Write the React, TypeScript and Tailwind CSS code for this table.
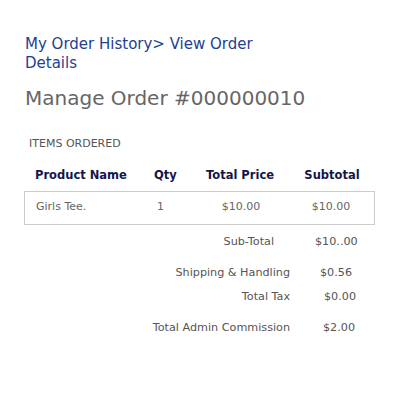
import React from "react";

export default function App() {
  const font = { fontFamily: '"DejaVu Sans", sans-serif' };
  return (
    <div className="w-[400px] h-[400px] bg-white overflow-hidden" style={font}>
      <div className="pl-[25px] pt-[35px]">
        <div className="w-[250px] text-[15px] leading-[19px] text-[#1f3f91]">
          My Order History&gt; View Order Details
        </div>
        <div className="mt-[13px] text-[20px] leading-[25px] text-[#666666]">
          Manage Order #000000010
        </div>
      </div>
      <div className="pl-[29px] mt-[26px] text-[11px] leading-[14px] text-[#555555] uppercase">
        Items Ordered
      </div>
      <div className="ml-[24px] w-[351px] mt-[12px]">
        <div className="grid grid-cols-[119px_52px_90px_90px] text-[11.5px] font-bold text-[#14164a] h-[28px] items-center">
          <div className="pl-[11px] pb-[2px]">Product Name</div>
          <div className="pl-[11px] pb-[2px]">Qty</div>
          <div className="text-center pb-[2px]">Total Price</div>
          <div className="text-center pl-[4px] pb-[2px]">Subtotal</div>
        </div>
        <div className="grid grid-cols-[119px_52px_90px_90px] text-[11px] text-[#666666] h-[34px] items-center border border-[#cccccc]">
          <div className="pl-[11px] pb-[2px]">Girls Tee.</div>
          <div className="pl-[13px] pb-[2px]">1</div>
          <div className="text-center pb-[2px]">$10.00</div>
          <div className="text-center pb-[2px]">$10.00</div>
        </div>
      </div>
      <div className="mt-[10px] text-[11.2px] text-[#555555] flex flex-col">
        <div className="flex h-[14px] items-center">
          <div className="w-[274px] text-right">Sub-Total</div>
          <div className="pl-[41px]">$10..00</div>
        </div>
        <div className="flex h-[14px] items-center mt-[17px]">
          <div className="w-[290px] text-right">Shipping &amp; Handling</div>
          <div className="pl-[30px]">$0.56</div>
        </div>
        <div className="flex h-[14px] items-center mt-[10px]">
          <div className="w-[290px] text-right">Total Tax</div>
          <div className="pl-[34px]">$0.00</div>
        </div>
        <div className="flex h-[14px] items-center mt-[17px]">
          <div className="w-[290px] text-right">Total Admin Commission</div>
          <div className="pl-[33px]">$2.00</div>
        </div>
      </div>
    </div>
  );
}
